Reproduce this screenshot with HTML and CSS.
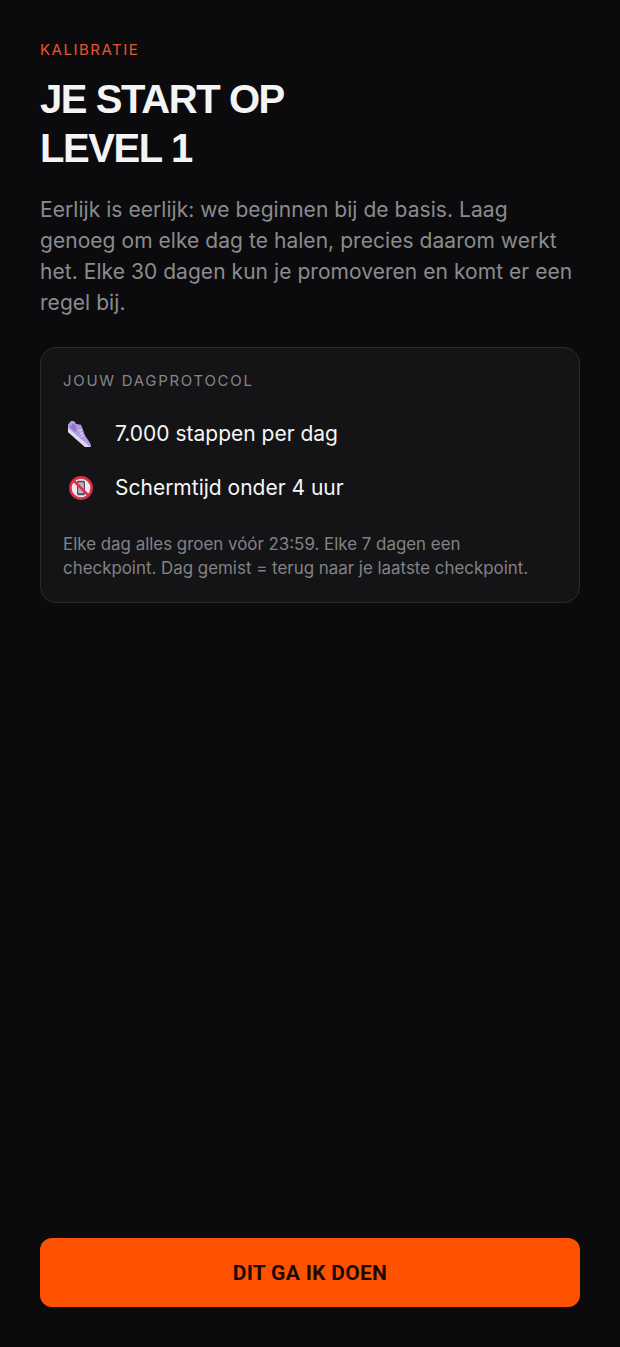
FILE: index.html
```html
<!DOCTYPE html>
<html lang="nl">
<head>
<meta charset="utf-8">
<title>Kalibratie</title>
<link rel="stylesheet" href="styles.css">
</head>
<body>
<main class="screen">
  <div class="content">
    <p class="eyebrow">KALIBRATIE</p>
    <h1 class="title">JE START OP<br>LEVEL 1</h1>
    <p class="lead">Eerlijk is eerlijk: we beginnen bij de basis. Laag genoeg om elke dag te halen, precies daarom werkt het. Elke 30 dagen kun je promoveren en komt er een regel bij.</p>
    <section class="card">
      <h2 class="card-label">JOUW DAGPROTOCOL</h2>
      <ul class="rules">
        <li class="rule">
          <svg class="icon" viewBox="0 0 26 26" aria-hidden="true">
            <g transform="rotate(40 13 13)">
              <path d="M-3 7 L3 8.5 L7 6 L10 7.5 L17 11.5 L24 13.5 Q29 14.5 29 18 L29 19 L-3 19 Z" fill="#b39be0"/>
              <path d="M-3 16.5 L29 17 L29 19.5 Q29 20.5 27 20.5 L-3 20 Z" fill="#e0d8ec"/>
              <path d="M0 10 L5 10.5 L8 15 L0 15 Z" fill="#8f76c6"/>
              <path d="M11 9.5 L9.5 12 M13.5 11 L12 13.5 M16 12.5 L14.5 15" stroke="#e8e2f3" stroke-width="1" fill="none"/>
            </g>
          </svg>
          <span>7.000 stappen per dag</span>
        </li>
        <li class="rule">
          <svg class="icon" viewBox="0 0 26 26" aria-hidden="true">
            <circle cx="13" cy="13" r="10.6" fill="#f4e6e8" stroke="#d8324a" stroke-width="2.6"/>
            <rect x="9" y="5.8" width="8" height="14.4" rx="1.2" fill="#55506a"/>
            <rect x="10.2" y="7.4" width="5.6" height="10.8" fill="#b9b4c6"/>
            <path d="M5.6 5.6 L20.4 20.4" stroke="#d8324a" stroke-width="2.6"/>
          </svg>
          <span>Schermtijd onder 4 uur</span>
        </li>
      </ul>
      <p class="note">Elke dag alles groen vóór 23:59. Elke 7 dagen een checkpoint. Dag gemist = terug naar je laatste checkpoint.</p>
    </section>
  </div>
  <button class="cta" type="button">DIT GA IK DOEN</button>
</main>
</body>
</html>
```

FILE: styles.css
```css
* { box-sizing: border-box; }

html, body {
  margin: 0;
  height: 100%;
  background: #0b0b0d;
}

body {
  font-family: Inter, "Liberation Sans", sans-serif;
}

.screen {
  height: 1347px;
  padding: 41px 40px 40px;
  display: flex;
  flex-direction: column;
  justify-content: space-between;
}

.eyebrow {
  margin: 0;
  font-size: 15px;
  line-height: 18px;
  letter-spacing: 1.5px;
  color: #e4572a;
}

.title {
  margin: 16px 0 0;
  font-family: "Liberation Sans", Arial, sans-serif;
  font-weight: 700;
  font-size: 40px;
  line-height: 49px;
  letter-spacing: -1.4px;
  color: #f4f4f4;
}

.lead {
  margin: 21px 0 0;
  font-size: 21px;
  line-height: 31px;
  letter-spacing: 0.05px;
  color: #8b8b8f;
}

.card {
  margin-top: 29px;
  padding: 24px 23px 22px 22px;
  background: #141416;
  border: 1px solid #2a2a2c;
  border-radius: 16px;
}

.card-label {
  margin: 0;
  font-weight: 400;
  font-size: 15px;
  line-height: 18px;
  letter-spacing: 1.7px;
  color: #858589;
}

.rules {
  list-style: none;
  margin: 28px 0 0;
  padding: 0;
  display: flex;
  flex-direction: column;
  gap: 22px;
}

.rule {
  display: flex;
  align-items: center;
  gap: 21px;
  font-size: 21px;
  line-height: 32px;
  color: #f6f6f6;
}

.icon {
  width: 26px;
  height: 26px;
  margin-left: 5px;
  flex: none;
}

.note {
  margin: 28px 0 0;
  max-width: 478px;
  font-size: 16.9px;
  line-height: 24px;
  color: #828286;
}

.cta {
  width: 100%;
  height: 69px;
  border: 0;
  border-radius: 12px;
  background: #ff5200;
  color: #1a0a04;
  font-family: Roboto, "Liberation Sans", sans-serif;
  font-weight: 700;
  font-size: 21px;
  letter-spacing: 0.3px;
}
```
